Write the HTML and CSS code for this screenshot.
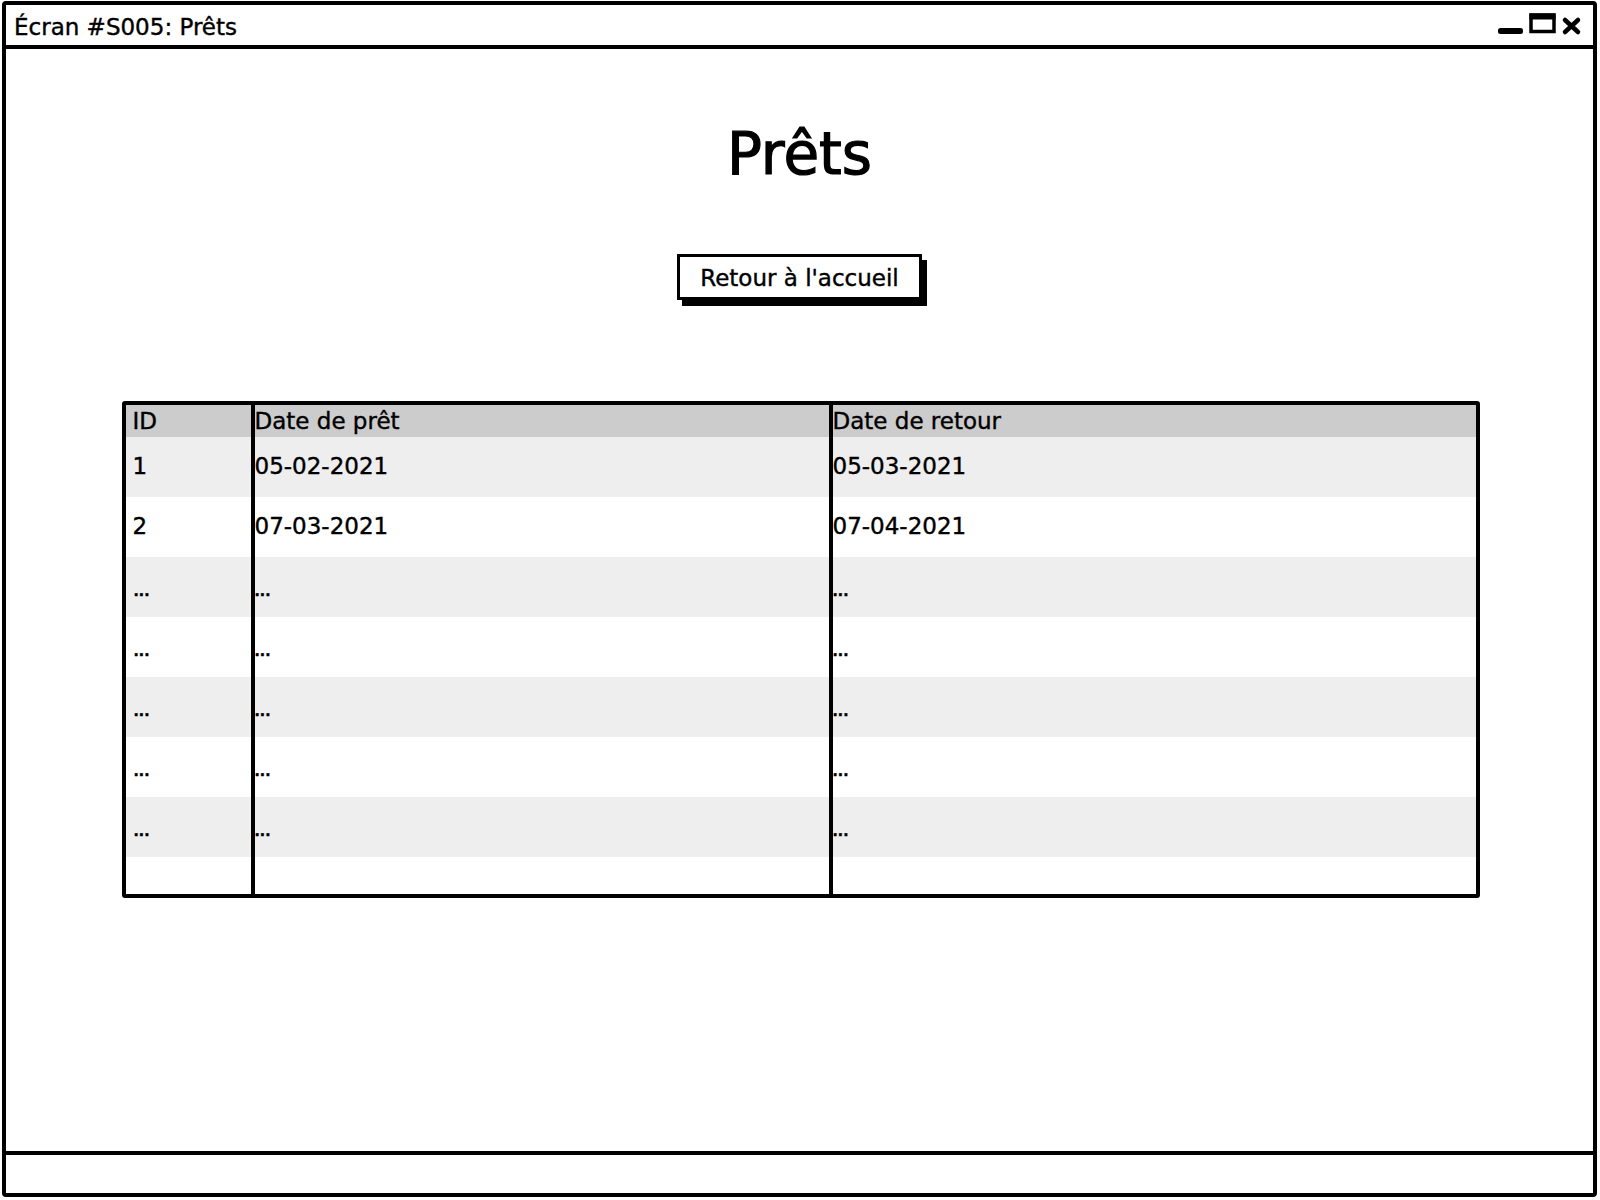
FILE: index.html
```html
<!DOCTYPE html>
<html lang="fr">
<head>
<meta charset="utf-8">
<title>Écran #S005: Prêts</title>
<link rel="stylesheet" href="styles.css">
</head>
<body>
<div class="window">
  <div class="titlebar">
    <span class="title">Écran #S005: Prêts</span>
    <svg class="controls" width="100" height="40" viewBox="0 0 100 40">
      <rect x="9" y="23" width="25" height="6" rx="2.5" fill="#000"/>
      <rect x="42" y="10" width="23" height="16.5" fill="none" stroke="#000" stroke-width="3.5"/>
      <rect x="40.5" y="8.5" width="26" height="6" fill="#000"/>
      <path d="M76 15 L89 27 M89 15 L76 27" stroke="#000" stroke-width="4.5" stroke-linecap="round"/>
    </svg>
  </div>
  <div class="main">
    <h1 class="heading">Prêts</h1>
    <div class="button">Retour à l'accueil</div>
    <div class="table">
      <div class="row head">
        <div class="cell c1">ID</div>
        <div class="cell c2">Date de prêt</div>
        <div class="cell c3">Date de retour</div>
      </div>
      <div class="row odd">
        <div class="cell c1">1</div>
        <div class="cell c2">05-02-2021</div>
        <div class="cell c3">05-03-2021</div>
      </div>
      <div class="row">
        <div class="cell c1">2</div>
        <div class="cell c2">07-03-2021</div>
        <div class="cell c3">07-04-2021</div>
      </div>
      <div class="row odd dots">
        <div class="cell c1">...</div>
        <div class="cell c2">...</div>
        <div class="cell c3">...</div>
      </div>
      <div class="row dots">
        <div class="cell c1">...</div>
        <div class="cell c2">...</div>
        <div class="cell c3">...</div>
      </div>
      <div class="row odd dots">
        <div class="cell c1">...</div>
        <div class="cell c2">...</div>
        <div class="cell c3">...</div>
      </div>
      <div class="row dots">
        <div class="cell c1">...</div>
        <div class="cell c2">...</div>
        <div class="cell c3">...</div>
      </div>
      <div class="row odd dots">
        <div class="cell c1">...</div>
        <div class="cell c2">...</div>
        <div class="cell c3">...</div>
      </div>
      <div class="row filler">
        <div class="cell c1"></div>
        <div class="cell c2"></div>
        <div class="cell c3"></div>
      </div>
    </div>
  </div>
  <div class="statusbar"></div>
</div>
</body>
</html>
```

FILE: styles.css
```css
html, body {
  margin: 0;
  padding: 0;
  background: #fff;
}
body {
  padding: 1px 3px 3px 2px;
  font-family: "DejaVu Sans", "Liberation Sans", sans-serif;
  color: #000;
  -webkit-text-stroke: 0.4px #000;
}
.window {
  box-sizing: border-box;
  height: 1196px;
  border: 4px solid #000;
  border-radius: 4px;
  display: flex;
  flex-direction: column;
}
.titlebar {
  height: 40px;
  border-bottom: 4px solid #000;
  display: flex;
  align-items: center;
  padding-left: 8px;
}
.title {
  font-size: 23px;
  line-height: 40px;
  padding-top: 3px;
}
.controls {
  margin-left: auto;
  margin-right: 4px;
  display: block;
}
.main {
  flex: 1;
  display: flex;
  flex-direction: column;
  align-items: center;
  padding-top: 71px;
}
.heading {
  margin: 0;
  font-size: 58px;
  font-weight: normal;
  line-height: 68px;
  -webkit-text-stroke: 1.2px #000;
}
.button {
  box-sizing: border-box;
  margin-top: 66px;
  width: 245px;
  height: 46px;
  border: 3px solid #000;
  box-shadow: 5px 6px 0 #000;
  font-size: 23px;
  line-height: 38px;
  padding-top: 2px;
  text-align: center;
}
.table {
  margin-top: 101px;
  box-sizing: border-box;
  width: 1358px;
  margin-left: 2px;
  border: 4px solid #000;
  border-radius: 3px;
}
.row {
  display: grid;
  grid-template-columns: 125px 578px 1fr;
  height: 60px;
  font-size: 23px;
}
.row.head {
  height: 32px;
  background: #cccccc;
}
.row.odd {
  background: #eeeeee;
}
.row.filler {
  height: 37px;
}
.cell {
  display: flex;
  align-items: center;
  padding-bottom: 3px;
  box-sizing: border-box;
}
.head .cell {
  padding-bottom: 1px;
}
.c1 {
  padding-left: 7px;
}
.c2, .c3 {
  border-left: 4px solid #000;
  padding-left: 0;
}
.dots .cell {
  font-size: 14px;
  font-weight: bold;
  padding-bottom: 0;
  padding-top: 8px;
}
.dots .c1 {
  padding-left: 8px;
}
.statusbar {
  height: 38px;
  border-top: 4px solid #000;
}
```
